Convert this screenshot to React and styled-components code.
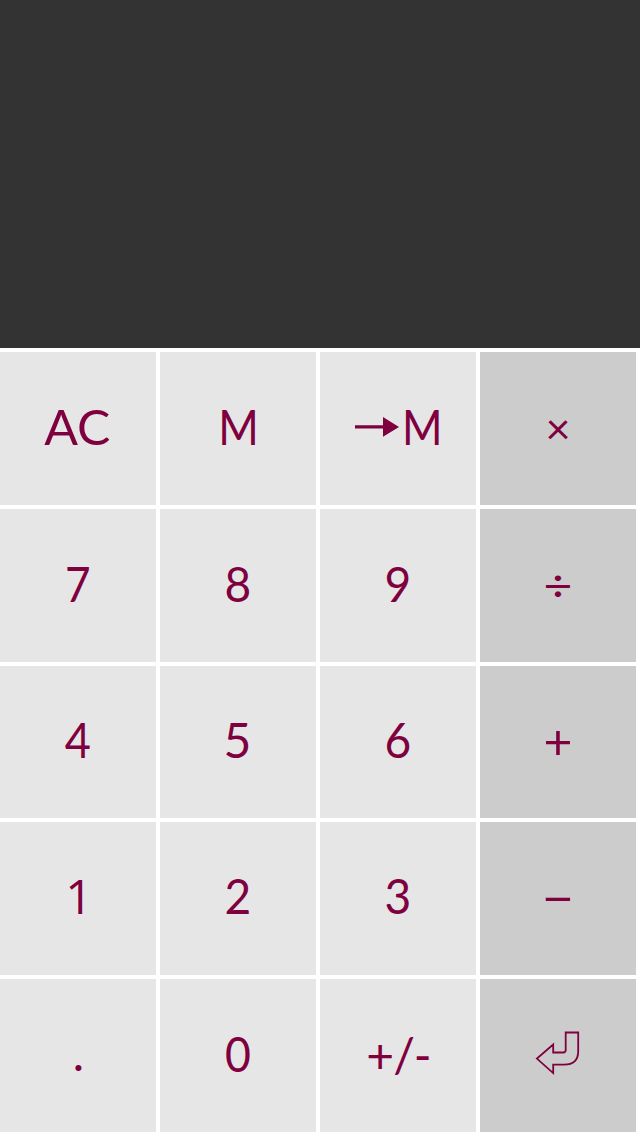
import React from 'react';
import styled, { createGlobalStyle } from 'styled-components';

const GlobalStyle = createGlobalStyle`
  * { box-sizing: border-box; }
  body { margin: 0; background: #fff; }
`;

const Calculator = styled.main`
  width: 640px;
  height: 1136px;
  display: flex;
  flex-direction: column;
  gap: 4px;
  background: #fff;
`;

const Display = styled.output`
  display: block;
  height: 348px;
  background: #333;
`;

const Keypad = styled.div`
  display: grid;
  grid-template-columns: repeat(4, 156px);
  grid-template-rows: 153px 153px 152px 153px 153px;
  gap: 4px;
`;

const Key = styled.button`
  display: flex;
  align-items: center;
  justify-content: center;
  margin: 0;
  padding: 0 0 5px;
  border: 0;
  border-radius: 0;
  background: ${(p) => (p.$operator ? '#ccc' : '#e6e6e6')};
  color: #7f003f;
  font: 400 48px/58px Lato, 'Liberation Sans', sans-serif;
`;

const Label = styled.span`
  display: block;
  white-space: pre;
  font-family: ${(p) => p.$font || 'inherit'};
  letter-spacing: ${(p) => p.$tracking || 0}px;
  transform: translate(${(p) => p.$dx || 0}px, ${(p) => p.$dy || 0}px)
    scale(${(p) => p.$sx || 1}, ${(p) => p.$sy || 1});
`;

const ArrowIcon = styled.svg`
  display: block;
  width: 44px;
  height: 20px;
  margin: 1px 1px 0 3px;
`;

const EnterIcon = styled.svg`
  display: block;
  width: 46px;
  height: 46px;
`;

const Arrow = () => (
  <ArrowIcon viewBox="0 0 44 20" fill="currentColor">
    <path d="M0 8.2H28V0L44 9.9L28 19.8V11.6H0Z" />
  </ArrowIcon>
);

const Enter = () => (
  <EnterIcon viewBox="0 0 46 46" fill="none" stroke="currentColor" strokeWidth="1.8">
    <path d="M30.7 2.5H43.2V21.2C43.2 30.2 38 34.6 29 34.6H18.2V43.1L1.9 28.6L18.2 14.5V22.5H28.2Q30.7 22.5 30.7 20Z" />
  </EnterIcon>
);

const keys = [
  { text: 'AC', dx: -0.5, dy: 0.5, sx: 1.04 },
  { text: 'M', dx: 0.3, dy: 0.5, sx: 0.91 },
  { text: 'M', arrow: true, dy: 0.5, sx: 0.91 },
  { text: '×', operator: true, sx: 0.9, sy: 0.9, dy: 2 },
  { text: '7', sx: 0.92, dy: 0.5 },
  { text: '8', sx: 0.96, dy: 0.5 },
  { text: '9', sx: 0.96, dy: 0.5 },
  { text: '÷', operator: true, dy: 1, sx: 1.04, sy: 0.92 },
  { text: '4', sx: 0.94 },
  { text: '5', dx: -0.5 },
  { text: '6', sx: 0.96 },
  { text: '+', operator: true, dy: 0.5, sx: 1.04, sy: 1.02 },
  { text: '1', font: "'Open Sans', sans-serif", dx: 1 },
  { text: '2', sx: 0.96 },
  { text: '3', sx: 0.96 },
  { text: '−', operator: true, dy: 2, sx: 1.18 },
  { text: '.', dx: 0.5 },
  { text: '0', sx: 0.93, dy: 0.5 },
  { text: '+/-', tracking: -1, dx: 0.5, dy: 2 },
  { enter: true, operator: true },
];

export default function App() {
  return (
    <>
      <GlobalStyle />
      <Calculator>
        <Display />
        <Keypad>
          {keys.map((k, i) => (
            <Key key={i} $operator={k.operator} aria-label={k.enter ? 'Enter' : undefined}>
              {k.arrow && <Arrow />}
              {k.enter ? (
                <Enter />
              ) : (
                <Label
                  $font={k.font}
                  $dx={k.dx}
                  $dy={k.dy}
                  $sx={k.sx}
                  $sy={k.sy}
                  $tracking={k.tracking}
                >
                  {k.text}
                </Label>
              )}
            </Key>
          ))}
        </Keypad>
      </Calculator>
    </>
  );
}
